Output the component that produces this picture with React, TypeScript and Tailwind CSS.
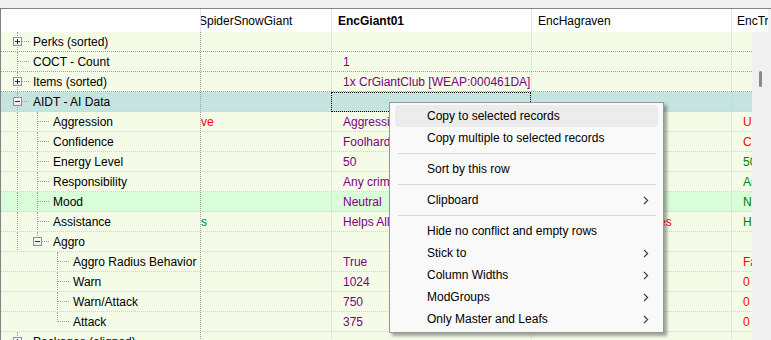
import React from 'react';

type Cell = { t: string; c?: string };
type Guide = 'full' | 'half' | 'none';
type Row = {
  label: string;
  guides: Guide[];
  exp?: '+' | '-';
  bg?: string;
  dark?: boolean;
  c1?: Cell;
  c2?: Cell;
  c3?: Cell;
  c4?: Cell;
  focus?: boolean;
};

const RED = 'text-[#ff0000]';
const GRN = 'text-[#008000]';
const PUR = 'text-[#800080]';

const rows: Row[] = [
  { label: 'Perks (sorted)', guides: ['full'], exp: '+', dark: true },
  { label: 'COCT - Count', guides: ['full'], dark: true, c2: { t: '1', c: PUR } },
  { label: 'Items (sorted)', guides: ['full'], exp: '+', dark: true, c2: { t: '1x CrGiantClub [WEAP:000461DA]', c: PUR } },
  { label: 'AIDT - AI Data', guides: ['full'], exp: '-', bg: 'bg-[#c6e4df]', focus: true },
  { label: 'Aggression', guides: ['full', 'full'], c1: { t: 've', c: RED }, c2: { t: 'Aggressive', c: PUR }, c3: { t: 'Aggressive', c: PUR }, c4: { t: 'Unaggressive', c: RED } },
  { label: 'Confidence', guides: ['full', 'full'], c2: { t: 'Foolhardy', c: PUR }, c3: { t: 'Average', c: PUR }, c4: { t: 'Cowardly', c: RED } },
  { label: 'Energy Level', guides: ['full', 'full'], c2: { t: '50', c: PUR }, c3: { t: '50', c: PUR }, c4: { t: '50', c: GRN } },
  { label: 'Responsibility', guides: ['full', 'full'], c2: { t: 'Any crime', c: PUR }, c3: { t: 'Any crime', c: PUR }, c4: { t: 'Any crime', c: GRN } },
  { label: 'Mood', guides: ['full', 'full'], bg: 'bg-[#d9fcd9]', c2: { t: 'Neutral', c: PUR }, c3: { t: 'Neutral', c: PUR }, c4: { t: 'Neutral', c: GRN } },
  { label: 'Assistance', guides: ['full', 'full'], c1: { t: 's', c: GRN }, c2: { t: 'Helps Allies', c: PUR }, c3: { t: 'Helps Friends and Allies', c: RED }, c4: { t: 'Helps Allies', c: GRN } },
  { label: 'Aggro', guides: ['full', 'half'], exp: '-' },
  { label: 'Aggro Radius Behavior', guides: ['none', 'none', 'full'], c2: { t: 'True', c: PUR }, c4: { t: 'False', c: RED } },
  { label: 'Warn', guides: ['none', 'none', 'full'], c2: { t: '1024', c: PUR }, c4: { t: '0', c: RED } },
  { label: 'Warn/Attack', guides: ['none', 'none', 'full'], c2: { t: '750', c: PUR }, c4: { t: '0', c: RED } },
  { label: 'Attack', guides: ['none', 'none', 'half'], c2: { t: '375', c: PUR }, c4: { t: '0', c: RED } },
  { label: 'Packages (aligned)', guides: ['full'], exp: '+', dark: true },
];

function Expander({ sign }: { sign: '+' | '-' }) {
  return (
    <div className="absolute left-[6px] top-[5px] w-[9px] h-[9px] border border-[#919191] bg-gradient-to-b from-white to-[#e8e8e8] z-10">
      <div className="absolute left-[1px] top-[3px] w-[5px] h-[1px] bg-[#2a2a3a]" />
      {sign === '+' && <div className="absolute left-[3px] top-[1px] w-[1px] h-[5px] bg-[#2a2a3a]" />}
    </div>
  );
}

function GuideBox({ g, last, exp }: { g: Guide; last: boolean; exp?: '+' | '-' }) {
  return (
    <div className="relative w-5 h-full shrink-0">
      {g === 'full' && <div className="absolute left-[10px] top-0 bottom-[-1px] border-l border-dotted border-[#a0a0a0]" />}
      {g === 'half' && <div className="absolute left-[10px] top-0 h-[10px] border-l border-dotted border-[#a0a0a0]" />}
      {last && <div className="absolute left-[10px] top-[9px] w-[12px] border-t border-dotted border-[#a0a0a0]" />}
      {last && exp && <Expander sign={exp} />}
    </div>
  );
}

function DataCell({ cell, w, pl = 'pl-[11px]' }: { cell?: Cell; w: string; pl?: string }) {
  return (
    <div className={`${w} shrink-0 h-full flex items-center ${pl} overflow-hidden whitespace-nowrap border-r border-dotted border-[#d2d2d2] relative`}>
      {cell && <span className={cell.c}>{cell.t}</span>}
    </div>
  );
}

function Chevron() {
  return (
    <svg width="6" height="9" viewBox="0 0 6 9" className="shrink-0">
      <path d="M1 0.8 L4.6 4.5 L1 8.2" fill="none" stroke="#3a3a3a" strokeWidth="1.2" />
    </svg>
  );
}

type MenuEntry = { label: string; sub?: boolean; hover?: boolean } | 'sep';

const menu: MenuEntry[] = [
  { label: 'Copy to selected records', hover: true },
  { label: 'Copy multiple to selected records' },
  'sep',
  { label: 'Sort by this row' },
  'sep',
  { label: 'Clipboard', sub: true },
  'sep',
  { label: 'Hide no conflict and empty rows' },
  { label: 'Stick to', sub: true },
  { label: 'Column Widths', sub: true },
  { label: 'ModGroups', sub: true },
  { label: 'Only Master and Leafs', sub: true },
];

export default function App() {
  return (
    <div
      className="relative w-[771px] h-[340px] overflow-hidden bg-[#f0f0f0] text-[12px] text-black"
      style={{ fontFamily: '"Liberation Sans", Arial, sans-serif' }}
    >
      <div className="h-2" />
      <div className="border-t border-l border-[#828282] flex flex-col h-[332px]">
        {/* header */}
        <div className="flex h-[23px] bg-white shrink-0">
          <div className="w-[200px] shrink-0 border-r border-[#e5e5e5]" />
          <div className="w-[131px] shrink-0 border-r border-[#e5e5e5] flex items-center overflow-hidden whitespace-nowrap">
            <span className="-ml-[2px]">SpiderSnowGiant</span>
          </div>
          <div className="w-[200px] shrink-0 border-r border-[#e5e5e5] flex items-center pl-[6px] font-bold whitespace-nowrap">
            EncGiant01
          </div>
          <div className="w-[200px] shrink-0 border-r border-[#e5e5e5] flex items-center pl-[6px] whitespace-nowrap">
            EncHagraven
          </div>
          <div className="flex-1 flex items-center pl-[5px] overflow-hidden whitespace-nowrap">EncTroll</div>
          <div className="w-[3px] shrink-0 bg-[#f0f0f0]" />
        </div>
        {/* body */}
        <div className="flex flex-1 min-h-0">
          <div className="flex-1 flex flex-col overflow-hidden">
            {rows.map((r, i) => (
              <div
                key={i}
                className={`flex h-5 shrink-0 border-b border-dotted ${r.dark ? 'border-[#a0a0a0]' : 'border-[#d2d2d2]'} ${r.bg ?? 'bg-[#f4fce8]'}`}
              >
                <div className="w-[200px] shrink-0 h-full flex items-center pl-[6px] border-r border-dotted border-[#a0a0a0] overflow-hidden whitespace-nowrap">
                  {r.guides.map((g, gi) => (
                    <GuideBox key={gi} g={g} last={gi === r.guides.length - 1} exp={r.exp} />
                  ))}
                  <span className="ml-[6px]">{r.label}</span>
                </div>
                <DataCell cell={r.c1} w="w-[131px]" pl="pl-0" />
                <div className="w-[200px] shrink-0 h-full flex items-center pl-[11px] whitespace-nowrap border-r border-dotted border-[#d2d2d2] relative">
                  {r.c2 && <span className={r.c2.c}>{r.c2.t}</span>}
                  {r.focus && (
                    <div className="absolute left-[-1px] top-0 w-[200px] h-[20px] border border-dotted border-black" />
                  )}
                </div>
                <DataCell cell={r.c3} w="w-[200px]" />
                <div className="flex-1 h-full flex items-center pl-[11px] overflow-hidden whitespace-nowrap">
                  {r.c4 && <span className={r.c4.c}>{r.c4.t}</span>}
                </div>
              </div>
            ))}
          </div>
          {/* scrollbar */}
          <div className="w-[19px] shrink-0 bg-[#f0f0f0] flex flex-col">
            <div className="ml-[7px] mt-[39px] w-[3px] h-[16px] rounded-full bg-[#8a8a8a]" />
          </div>
        </div>
      </div>

      {/* context menu */}
      <div className="absolute left-[389px] top-[102px] w-[275px] bg-[#f9f9f9] border border-[#979797] py-[2px] shadow-[3px_3px_3px_rgba(0,0,0,0.35)]">
        {menu.map((m, i) =>
          m === 'sep' ? (
            <div key={i} className="h-[9px] flex items-center pl-[8px] pr-[7px]">
              <div className="h-px w-full bg-[#d7d7d7]" />
            </div>
          ) : (
            <div
              key={i}
              className={`mx-[5px] h-[22px] rounded-[4px] flex items-center pl-[32px] pr-[9px] whitespace-nowrap ${m.hover ? 'bg-[#ececec]' : ''}`}
            >
              <span className="flex-1">{m.label}</span>
              {m.sub && <Chevron />}
            </div>
          )
        )}
      </div>
    </div>
  );
}
